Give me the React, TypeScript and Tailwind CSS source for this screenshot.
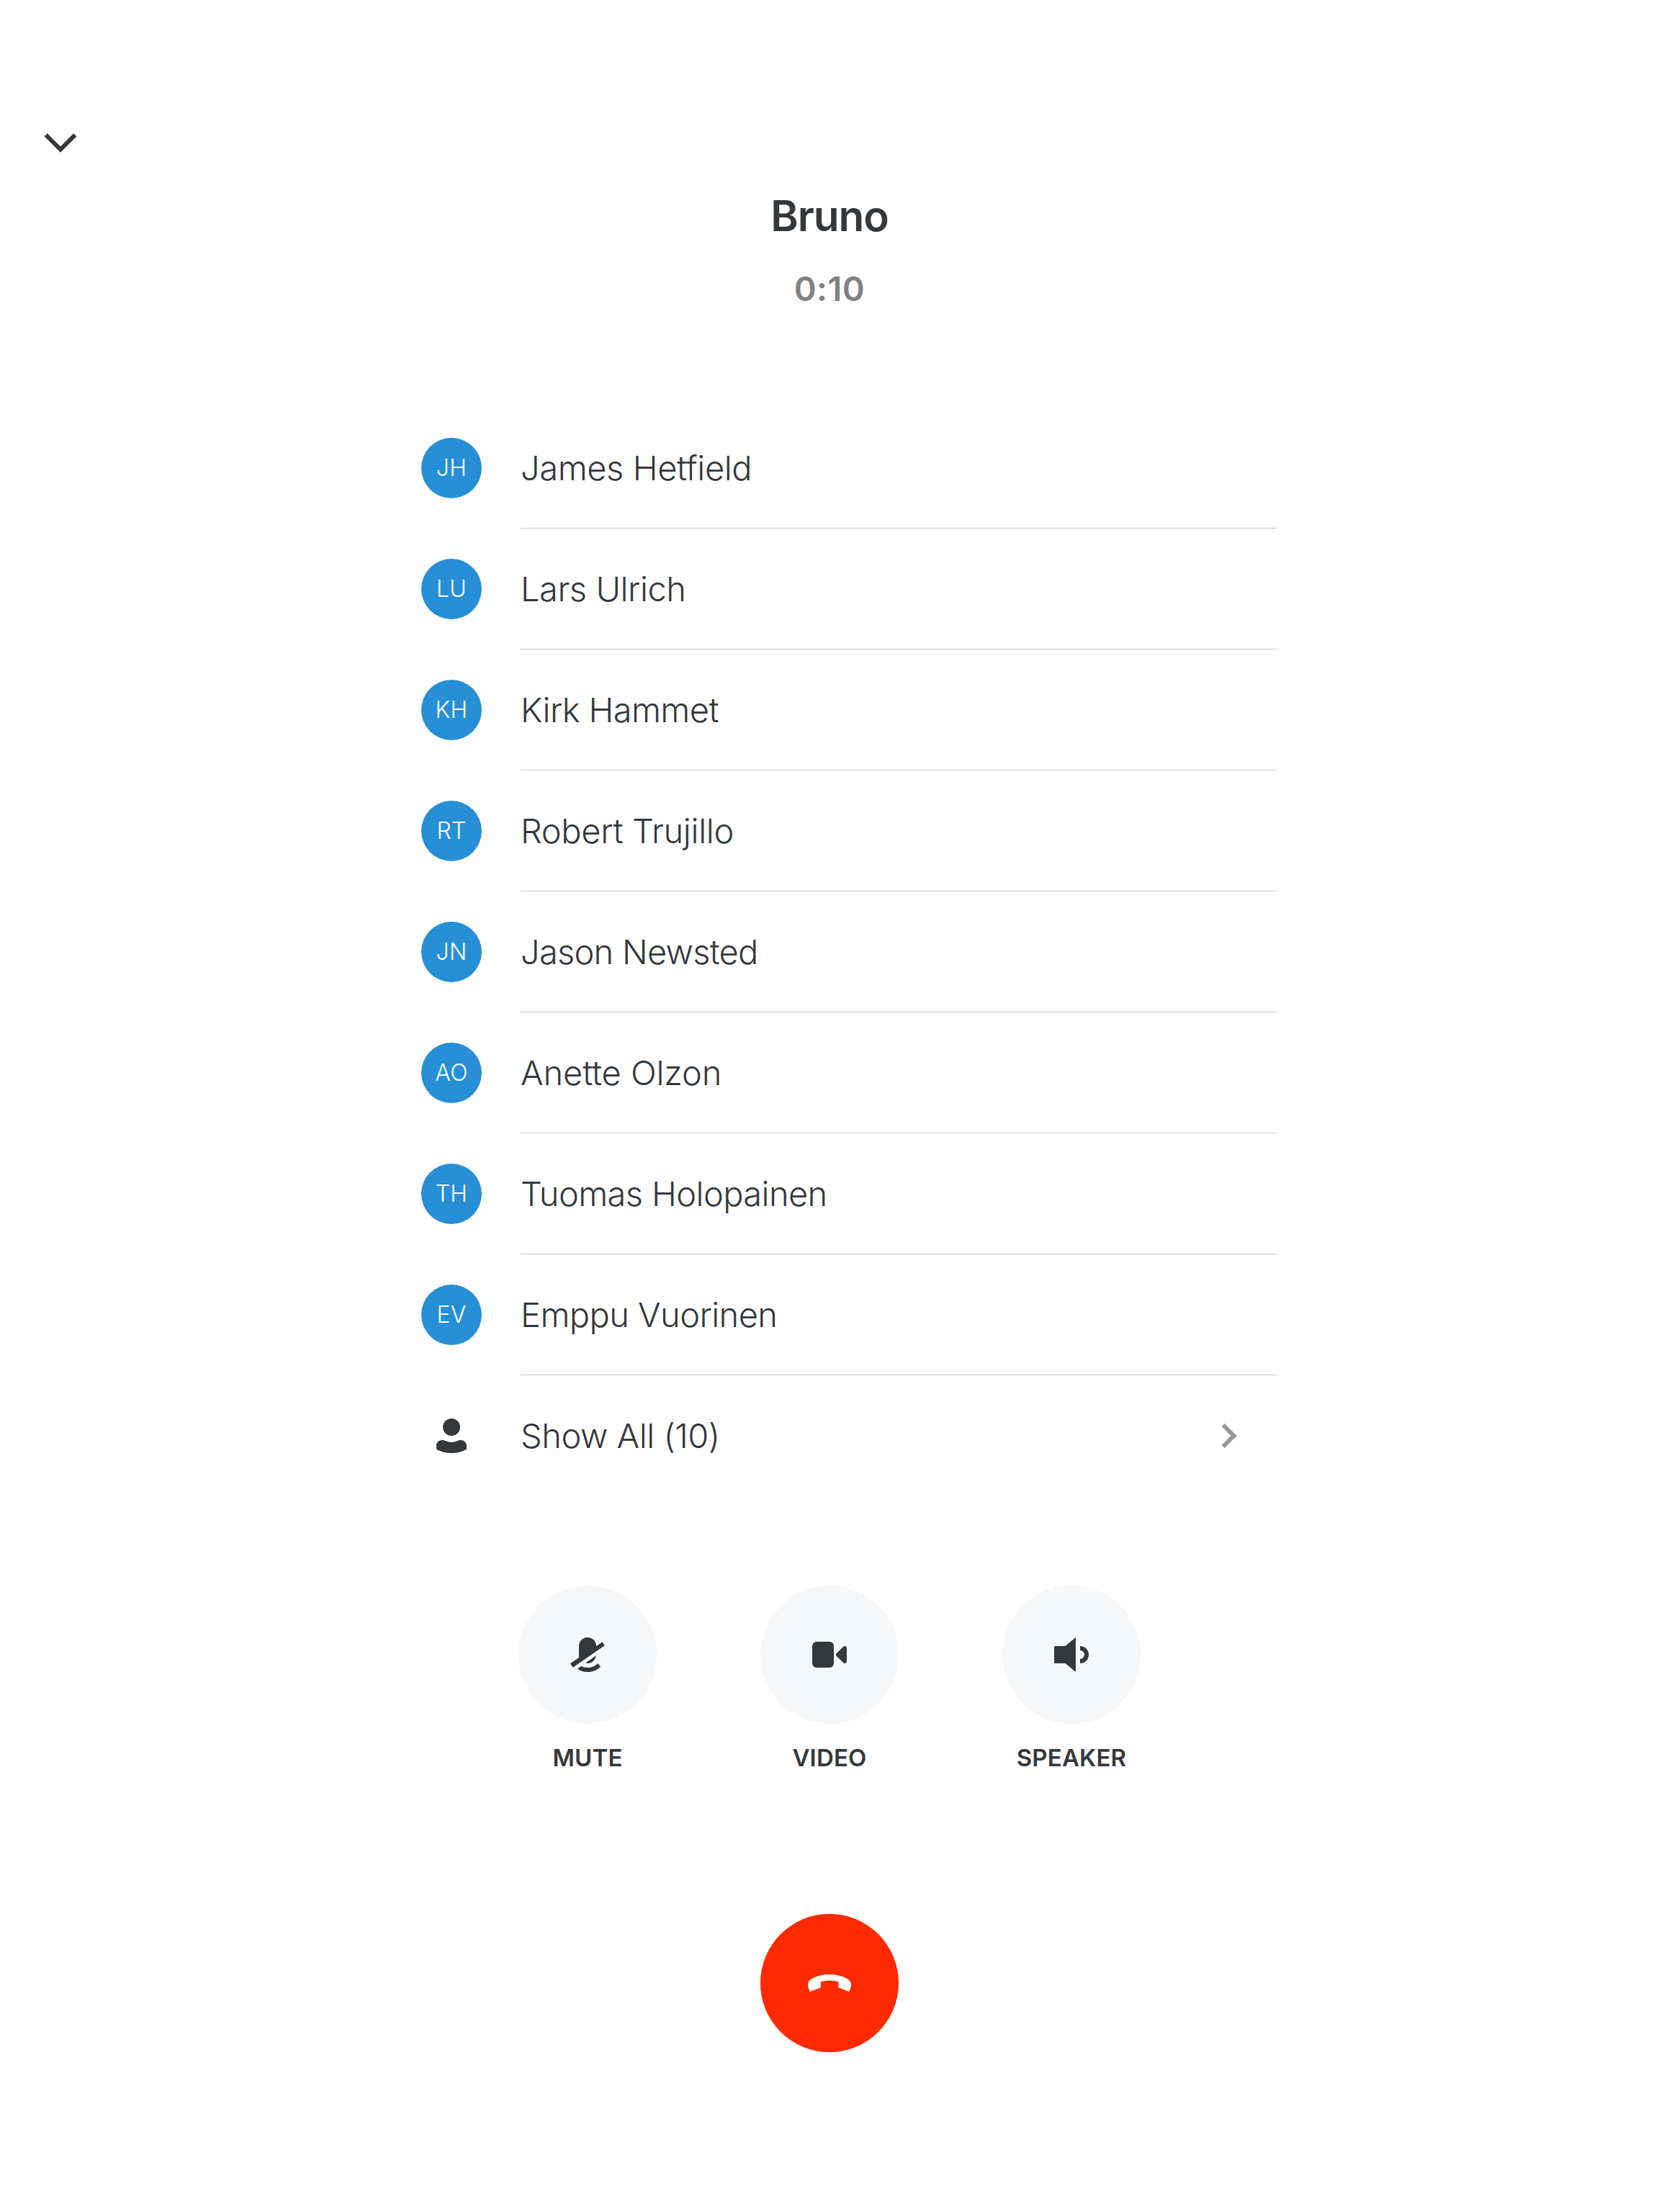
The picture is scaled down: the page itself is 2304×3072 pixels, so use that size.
import React from "react";

const people = [
  { initials: "JH", name: "James Hetfield", tracking: "tracking-[-0.4px]" },
  { initials: "LU", name: "Lars Ulrich", tracking: "tracking-[-0.46px]" },
  { initials: "KH", name: "Kirk Hammet", tracking: "tracking-[-0.6px]" },
  { initials: "RT", name: "Robert Trujillo", tracking: "tracking-[-0.34px]" },
  { initials: "JN", name: "Jason Newsted", tracking: "tracking-[-0.74px]" },
  { initials: "AO", name: "Anette Olzon", tracking: "tracking-[-0.1px]" },
  { initials: "TH", name: "Tuomas Holopainen", tracking: "tracking-[-0.6px]" },
  { initials: "EV", name: "Emppu Vuorinen", tracking: "tracking-[-0.58px]" },
];

function MuteIcon() {
  return (
    <svg viewBox="0 0 48 48" className="size-12" fill="currentColor">
      <path d="M12 28V12a12 12 0 0 1 24 0v0.3L44.7 6.3 47.7 11.3 3.7 41.7 0 36.3Z" />
      <path d="M21.5 35.3 35.7 25.3C35 31.5 30 36 24 36Q22.5 36 21.5 35.3Z" />
      <path d="M10 43.4 15 40Q19 42 24 42C29.5 42 34.5 40 38.3 36L42 40.7C37.2 45.5 31 48 24 48Q16 48 10 43.4Z" />
    </svg>
  );
}

function VideoIcon() {
  return (
    <svg viewBox="0 0 48 48" className="size-12" fill="currentColor">
      <rect x="0" y="6" width="30" height="36" rx="6" />
      <path d="M33.8 22 43 12.9C44.9 11.1 48 12.3 48 15V33C48 35.7 44.9 36.9 43 35.1L33.8 26Q32 24 33.8 22Z" />
    </svg>
  );
}

function SpeakerIcon() {
  return (
    <svg viewBox="0 0 48 48" className="size-12" fill="currentColor">
      <path d="M1.5 12H15.5L30 0V48L15.5 36H1.5Q0 36 0 34.5V13.5Q0 12 1.5 12Z" />
      <path d="M36 12a12 12 0 0 1 0 24V30a6 6 0 0 0 0-12Z" />
    </svg>
  );
}

function HangUpIcon() {
  return (
    <svg viewBox="0 0 60 24" className="h-6 w-15" fill="currentColor">
      <path d="M0 14.5Q0 10.5 2.5 8.2C9 3 18.5 0 30 0S51 3 57.5 8.2Q60 10.5 60 14.5Q60 19.5 57 24L42.5 18.3V10.3Q36.5 8.5 30 8.5T17.7 10.3V18.3L3.2 24Q0 19.5 0 14.5Z" />
    </svg>
  );
}

function PersonIcon() {
  return (
    <svg viewBox="0 0 42 48" className="h-12 w-[42px]" fill="currentColor">
      <circle cx="21" cy="12" r="12" />
      <path d="M0 38C0 33 3.5 30 8.5 30C10.2 30 11.4 30.4 12.8 31.1Q16.5 33 21 33T29.2 31.1C30.6 30.4 31.8 30 33.5 30C38.5 30 42 33 42 38V42.7C36 46.2 29 48 21 48S6 46.2 0 42.7Z" />
    </svg>
  );
}

const controls = [
  { label: "MUTE", icon: <MuteIcon /> },
  { label: "VIDEO", icon: <VideoIcon /> },
  { label: "SPEAKER", icon: <SpeakerIcon /> },
];

export default function App() {
  return (
    <div className="flex h-[3072px] w-[2304px] flex-col items-center bg-white font-['Inter',sans-serif] text-[#34383b]">
      <header className="flex w-full flex-col items-center pt-[182px]">
        <button className="ml-[60px] self-start" aria-label="Minimize">
          <svg viewBox="0 0 48 32" className="block h-8 w-12" fill="none" stroke="currentColor" strokeWidth="6">
            <path d="M3.7 5.3 24 25.6 44.3 5.3" />
          </svg>
        </button>
        <h1 className="mt-[46px] text-[58.5px] leading-[80px] font-semibold tracking-[-1.1px]">Bruno</h1>
        <p className="mt-[29px] text-[47px] leading-[64px] font-semibold tracking-[0.45px] text-[#808182]">0:10</p>
      </header>

      <ul className="mt-[133px] ml-[54px] w-[1188px] text-[47px] leading-[71px] font-light">
        {people.map((p) => (
          <li key={p.initials} className="flex h-[168px] items-stretch">
            <div className="mt-[42px] flex size-[84px] shrink-0 items-center justify-center rounded-full bg-[#268fd6] pb-px text-[32px] leading-[49px] tracking-[0.3px] text-white">
              {p.initials}
            </div>
            <div className={`ml-[54px] flex flex-1 items-center border-b border-[#c7c8c9] ${p.tracking}`}>{p.name}</div>
          </li>
        ))}
        <li className="flex h-[168px] items-center">
          <div className="flex w-[84px] justify-center">
            <PersonIcon />
          </div>
          <div className="ml-[54px] flex-1 pb-px tracking-[-0.48px]">Show All (10)</div>
          <svg viewBox="0 0 22 36" className="mr-[55px] h-9 w-[22px] text-[#999]" fill="none" stroke="currentColor" strokeWidth="6">
            <path d="M2.6 3 17.6 18 2.6 33" />
          </svg>
        </li>
      </ul>

      <div className="mt-[124px] flex gap-36">
        {controls.map((c) => (
          <div key={c.label} className="flex w-48 flex-col items-center">
            <button className="flex size-48 items-center justify-center rounded-full bg-[#f5f7f9]">{c.icon}</button>
            <span className="mt-[27px] text-[33px] leading-[40px] font-semibold tracking-[0.15px]">{c.label}</span>
          </div>
        ))}
      </div>

      <button className="mt-[197px] flex size-48 items-center justify-center rounded-full bg-[#ff2a00] text-white" aria-label="End call">
        <HangUpIcon />
      </button>
    </div>
  );
}
